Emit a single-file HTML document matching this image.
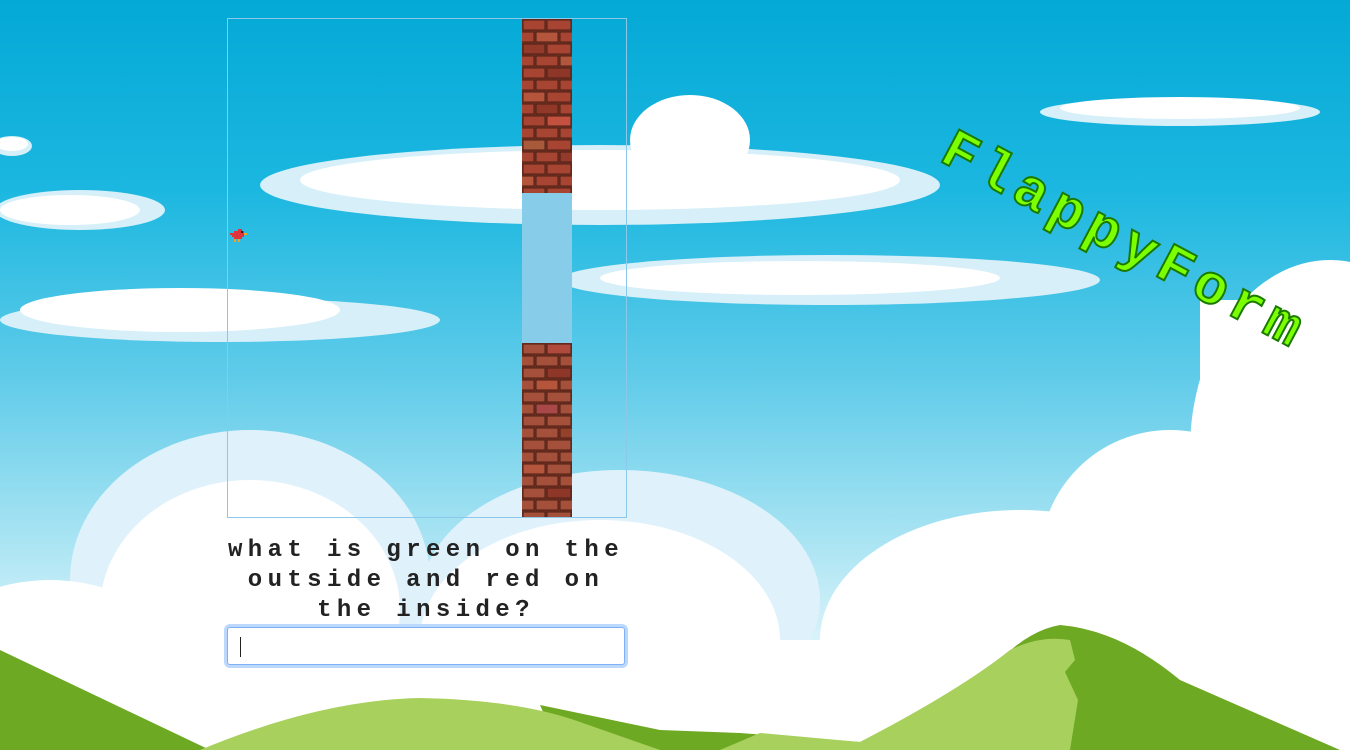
<!DOCTYPE html>
<html><head><meta charset="utf-8"><style>
html,body{margin:0;padding:0;width:1350px;height:750px;overflow:hidden}
body{position:relative;background:linear-gradient(#04a9d6 0%,#1bb7e0 25%,#5fcbe9 50%,#a9e4f3 72%,#d8f2fa 85%)}
#bg{position:absolute;left:0;top:0}
#canvas{position:absolute;left:227px;top:18px;width:398px;height:498px;border:1px solid #8cc8ea}
.brick{position:absolute;left:294px;width:50px}
#gap{position:absolute;left:294px;top:174px;width:50px;height:150px;background:#87cdea}
#title{position:absolute;left:958px;top:122px;line-height:56px;transform-origin:0 0;transform:rotate(28deg);font:bold 56px/56px "Liberation Mono",monospace;letter-spacing:7px;color:#7cff00;-webkit-text-stroke:2px #1a7a00;white-space:nowrap}
#q{position:absolute;left:220px;top:536px;width:412px;text-align:center;font:bold 24px/30px "Liberation Mono",monospace;letter-spacing:5.4px;color:#222}
#inp{position:absolute;left:227px;top:627px;width:396px;height:36px;background:#fff;border:1px solid #7fb1f5;border-radius:3px;box-shadow:0 0 0 3px #bcd8fc}
#caret{position:absolute;left:12px;top:9px;width:1px;height:20px;background:#222}
</style></head><body>
<svg id="bg" width="1350" height="750">
<g fill="#d6eff8">
<ellipse cx="12" cy="146" rx="20" ry="10"/>
<ellipse cx="80" cy="210" rx="85" ry="20"/>
<ellipse cx="220" cy="320" rx="220" ry="22"/>
<ellipse cx="600" cy="185" rx="340" ry="40"/>
<ellipse cx="1180" cy="112" rx="140" ry="14"/>
<ellipse cx="830" cy="280" rx="270" ry="25"/>
</g>
<g fill="#fff">
<ellipse cx="12" cy="144" rx="16" ry="7"/>
<ellipse cx="70" cy="210" rx="70" ry="15"/>
<ellipse cx="180" cy="310" rx="160" ry="22"/>
<ellipse cx="600" cy="180" rx="300" ry="30"/>
<ellipse cx="690" cy="140" rx="60" ry="45"/>
<ellipse cx="1180" cy="108" rx="120" ry="11"/>
<ellipse cx="800" cy="278" rx="200" ry="17"/>
</g>
<g fill="#dff2fb">
<ellipse cx="250" cy="580" rx="180" ry="150"/>
<ellipse cx="620" cy="600" rx="200" ry="130"/>
</g>
<g fill="#fff">
<ellipse cx="250" cy="610" rx="150" ry="130"/>
<ellipse cx="600" cy="640" rx="180" ry="120"/>
<ellipse cx="50" cy="700" rx="150" ry="120"/>
<ellipse cx="1020" cy="640" rx="200" ry="130"/>
<ellipse cx="1170" cy="560" rx="130" ry="130"/>
<ellipse cx="1330" cy="450" rx="140" ry="190"/>
<rect x="0" y="640" width="1350" height="110"/>
<rect x="1200" y="300" width="150" height="450"/>
</g>
<path d="M0 650 L210 750 L0 750Z" fill="#6ea923"/>
<path d="M540 705 L660 730 L740 733 L860 742 Q950 700 1000 660 Q1030 630 1060 625 Q1120 630 1180 680 L1340 750 L560 750Z" fill="#6ea923"/>
<path d="M200 750 Q320 700 420 698 Q520 700 580 722 L660 750Z" fill="#a8d05c"/>
<path d="M720 750 L760 733 L860 742 Q960 690 1010 650 Q1040 635 1070 640 L1075 660 L1065 672 L1078 700 L1070 750Z" fill="#a8d05c"/>
</svg>
<div id="canvas">
<svg class="brick" style="top:0" width="50" height="174">
<rect width="50" height="174" fill="#7a3322"/>
<g fill="#a84432" stroke="#4a1f16" stroke-width="1">
<rect x="1" y="1" width="22" height="10"/><rect x="25" y="1" width="24" height="10"/>
<rect x="-10" y="13" width="22" height="10"/><rect x="14" y="13" width="22" height="10" fill="#b5553b"/><rect x="38" y="13" width="22" height="10"/>
<rect x="1" y="25" width="22" height="10" fill="#933a2a"/><rect x="25" y="25" width="24" height="10"/>
<rect x="-10" y="37" width="22" height="10"/><rect x="14" y="37" width="22" height="10"/><rect x="38" y="37" width="22" height="10" fill="#b2563c"/>
<rect x="1" y="49" width="22" height="10"/><rect x="25" y="49" width="24" height="10" fill="#8e3729"/>
<rect x="-10" y="61" width="22" height="10"/><rect x="14" y="61" width="22" height="10"/><rect x="38" y="61" width="22" height="10"/>
<rect x="1" y="73" width="22" height="10" fill="#b5553b"/><rect x="25" y="73" width="24" height="10"/>
<rect x="-10" y="85" width="22" height="10"/><rect x="14" y="85" width="22" height="10" fill="#923828"/><rect x="38" y="85" width="22" height="10"/>
<rect x="1" y="97" width="22" height="10"/><rect x="25" y="97" width="24" height="10" fill="#c4503f"/>
<rect x="-10" y="109" width="22" height="10"/><rect x="14" y="109" width="22" height="10"/><rect x="38" y="109" width="22" height="10"/>
<rect x="1" y="121" width="22" height="10" fill="#a85a3a"/><rect x="25" y="121" width="24" height="10"/>
<rect x="-10" y="133" width="22" height="10"/><rect x="14" y="133" width="22" height="10"/><rect x="38" y="133" width="22" height="10" fill="#933a2a"/>
<rect x="1" y="145" width="22" height="10"/><rect x="25" y="145" width="24" height="10"/>
<rect x="-10" y="157" width="22" height="10" fill="#b5553b"/><rect x="14" y="157" width="22" height="10"/><rect x="38" y="157" width="22" height="10"/>
<rect x="1" y="169" width="22" height="10"/><rect x="25" y="169" width="24" height="10"/>
</g></svg>
<div id="gap"></div>
<svg class="brick" style="top:324px" width="50" height="174">
<rect width="50" height="174" fill="#7a3322"/>
<g fill="#a5503a" stroke="#4a1f16" stroke-width="1">
<rect x="1" y="1" width="22" height="10"/><rect x="25" y="1" width="24" height="10" fill="#b04a3c"/>
<rect x="-10" y="13" width="22" height="10"/><rect x="14" y="13" width="22" height="10"/><rect x="38" y="13" width="22" height="10"/>
<rect x="1" y="25" width="22" height="10"/><rect x="25" y="25" width="24" height="10" fill="#8e3729"/>
<rect x="-10" y="37" width="22" height="10"/><rect x="14" y="37" width="22" height="10" fill="#b5553b"/><rect x="38" y="37" width="22" height="10"/>
<rect x="1" y="49" width="22" height="10"/><rect x="25" y="49" width="24" height="10"/>
<rect x="-10" y="61" width="22" height="10"/><rect x="14" y="61" width="22" height="10" fill="#a84848"/><rect x="38" y="61" width="22" height="10"/>
<rect x="1" y="73" width="22" height="10"/><rect x="25" y="73" width="24" height="10"/>
<rect x="-10" y="85" width="22" height="10"/><rect x="14" y="85" width="22" height="10"/><rect x="38" y="85" width="22" height="10" fill="#93412a"/>
<rect x="1" y="97" width="22" height="10"/><rect x="25" y="97" width="24" height="10"/>
<rect x="-10" y="109" width="22" height="10"/><rect x="14" y="109" width="22" height="10"/><rect x="38" y="109" width="22" height="10"/>
<rect x="1" y="121" width="22" height="10" fill="#b5553b"/><rect x="25" y="121" width="24" height="10"/>
<rect x="-10" y="133" width="22" height="10"/><rect x="14" y="133" width="22" height="10"/><rect x="38" y="133" width="22" height="10"/>
<rect x="1" y="145" width="22" height="10"/><rect x="25" y="145" width="24" height="10" fill="#8e3729"/>
<rect x="-10" y="157" width="22" height="10"/><rect x="14" y="157" width="22" height="10"/><rect x="38" y="157" width="22" height="10"/>
<rect x="1" y="169" width="22" height="10"/><rect x="25" y="169" width="24" height="10"/>
</g></svg>
<svg style="position:absolute;left:0;top:206px" width="20" height="20">
<path d="M2 8h4v-2h4v-2h4v2h2v2h2v2h-2v2h-2v2h-8v-2h-2v-2h-2z" fill="#e0343c"/>
<rect x="13" y="6" width="2" height="2" fill="#222"/>
<rect x="16" y="8" width="3" height="2" fill="#f5a020"/>
<rect x="6" y="14" width="2" height="3" fill="#f5a020"/><rect x="10" y="14" width="2" height="3" fill="#f5a020"/>
</svg>
</div>
<div id="title">FlappyForm</div>
<div id="q">what is green on the outside and red on the inside?</div>
<div id="inp"><div id="caret"></div></div>
</body></html>
